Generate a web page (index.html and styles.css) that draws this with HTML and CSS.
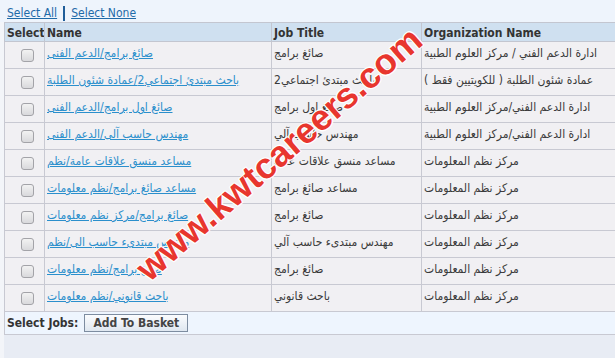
FILE: index.html
```html
<!DOCTYPE html>
<html>
<head>
<meta charset="utf-8">
<link rel="stylesheet" href="styles.css">
</head>
<body>
<div class="page">
  <div class="toolbar">
    <a href="#" class="tlink">Select All</a><span class="sep"></span><a href="#" class="tlink">Select None</a>
  </div>
  <table class="jobs">
    <colgroup>
      <col class="col-sel"><col class="col-name"><col class="col-title"><col class="col-org">
    </colgroup>
    <thead>
      <tr><th>Select</th><th>Name</th><th>Job Title</th><th>Organization Name</th></tr>
    </thead>
    <tbody>
      <tr><td class="sel"><input type="checkbox"></td><td><a href="#">صائغ برامج/الدعم الفنى</a></td><td>صائغ برامج</td><td>ادارة الدعم الفني / مركز العلوم الطبية</td></tr>
      <tr><td class="sel"><input type="checkbox"></td><td><a href="#">باحث مبتدئ اجتماعي2/عمادة شئون الطلبة</a></td><td>باحث مبتدئ اجتماعي2</td><td><span dir="rtl">عمادة شئون الطلبة ( للكويتيين فقط )</span></td></tr>
      <tr><td class="sel"><input type="checkbox"></td><td><a href="#">صائغ اول برامج/الدعم الفنى</a></td><td>صائغ اول برامج</td><td>ادارة الدعم الفني/مركز العلوم الطبية</td></tr>
      <tr><td class="sel"><input type="checkbox"></td><td><a href="#">مهندس حاسب آلى/الدعم الفنى</a></td><td>مهندس حاسب آلي</td><td>ادارة الدعم الفني/مركز العلوم الطبية</td></tr>
      <tr><td class="sel"><input type="checkbox"></td><td><a href="#">مساعد منسق علاقات عامة/نظم</a></td><td>مساعد منسق علاقات عامة</td><td>مركز نظم المعلومات</td></tr>
      <tr><td class="sel"><input type="checkbox"></td><td><a href="#">مساعد صائغ برامج/نظم معلومات</a></td><td>مساعد صائغ برامج</td><td>مركز نظم المعلومات</td></tr>
      <tr><td class="sel"><input type="checkbox"></td><td><a href="#">صائغ برامج/مركز نظم معلومات</a></td><td>صائغ برامج</td><td>مركز نظم المعلومات</td></tr>
      <tr><td class="sel"><input type="checkbox"></td><td><a href="#">مهندس مبتدىء حاسب الى/نظم</a></td><td>مهندس مبتدىء حاسب آلي</td><td>مركز نظم المعلومات</td></tr>
      <tr><td class="sel"><input type="checkbox"></td><td><a href="#">صائغ برامج/نظم معلومات</a></td><td>صائغ برامج</td><td>مركز نظم المعلومات</td></tr>
      <tr><td class="sel"><input type="checkbox"></td><td><a href="#">باحث قانوني/نظم معلومات</a></td><td>باحث قانوني</td><td>مركز نظم المعلومات</td></tr>
    </tbody>
    <tfoot>
      <tr><td colspan="4"><span class="foot-label">Select Jobs:</span><button type="button" class="basket">Add To Basket</button></td></tr>
    </tfoot>
  </table>
  <div class="rest"></div>
</div>
<div class="watermark">www.kwtcareers.com</div>
</body>
</html>
```
FILE: styles.css
```css
html, body {
  margin: 0;
  padding: 0;
}
body {
  width: 615px;
  height: 358px;
  overflow: hidden;
  background: #f3f5f9;
  font-family: "DejaVu Sans Condensed", "DejaVu Sans", "Liberation Sans", sans-serif;
  font-stretch: condensed;
  font-size: 12px;
  color: #333;
  position: relative;
}
.page {
  display: flex;
  flex-direction: column;
  height: 358px;
}
.toolbar {
  background: #eef4fc;
  height: 22px;
  padding-left: 7px;
  display: flex;
  align-items: center;
  gap: 5px;
  padding-top: 4px;
  box-sizing: border-box;
}
.tlink {
  color: #1f6aa8;
  text-decoration: underline;
  font-size: 12px;
}
.sep {
  width: 2px;
  height: 15px;
  background: #1f5d99;
  margin: 0 1px;
}
.jobs {
  margin-left: 4px;
  width: 611px;
  border-collapse: collapse;
  table-layout: fixed;
  background: #f1f0f3;
}
.col-sel { width: 40px; }
.col-name { width: 227px; }
.col-title { width: 150px; }
.col-org { width: 194px; }
.jobs th {
  background: #cfe0f0;
  text-align: left;
  font-weight: bold;
  color: #333;
  padding: 1px 2px 0 2px;
  height: 17px;
  line-height: 16px;
  border: 1px solid #c3c6d0;
  border-left-color: #9a9ca8;
  white-space: nowrap;
  overflow: hidden;
}
.jobs th:first-child {
  border-left-color: #c3c6d0;
}
.jobs td {
  border: 1px solid #c8c9d2;
  padding: 3px 2px 0 2px;
  height: 23px;
  vertical-align: top;
  line-height: 16px;
  white-space: nowrap;
  color: #3a3a3a;
}
.jobs td a {
  color: #2b8fcc;
  text-decoration: underline;
}
.jobs td.sel {
  vertical-align: middle;
  padding: 0;
}
.sel input {
  appearance: none;
  -webkit-appearance: none;
  width: 13px;
  height: 13px;
  margin: 1px 0 0 16px;
  border: 1px solid #a3a3a8;
  border-radius: 3px;
  background: linear-gradient(#f2f2f2, #d9d9dc);
  box-sizing: border-box;
  display: block;
}
.jobs tfoot td {
  background: #eef5fe;
  height: 22px;
  padding: 0 0 0 2px;
  vertical-align: middle;
  border-color: #c8c9d2;
}
.foot-label {
  font-weight: bold;
  color: #333;
  margin-right: 6px;
}
.basket {
  font-family: inherit;
  font-stretch: condensed;
  font-size: 12px;
  font-weight: bold;
  color: #444;
  height: 18px;
  width: 104px;
  padding: 0;
  border: 1px solid #7d8ca0;
  border-radius: 0;
  background: linear-gradient(#fbfcfe, #dfe7f0);
  vertical-align: middle;
}
.rest {
  flex: 1;
  margin-left: 4px;
  background: #e8ecf4;
}
.watermark {
  position: absolute;
  left: 279px;
  top: 154px;
  transform: translate(-50%, -50%) rotate(-41deg);
  font-family: "Liberation Sans", Arial, sans-serif;
  font-stretch: normal;
  font-weight: bold;
  font-size: 36px;
  color: #e8362e;
  white-space: nowrap;
  text-shadow: 1px 1px 0 #fff, -1px -1px 0 #fff, 1px -1px 0 #fff, -1px 1px 0 #fff;
  pointer-events: none;
}
```
